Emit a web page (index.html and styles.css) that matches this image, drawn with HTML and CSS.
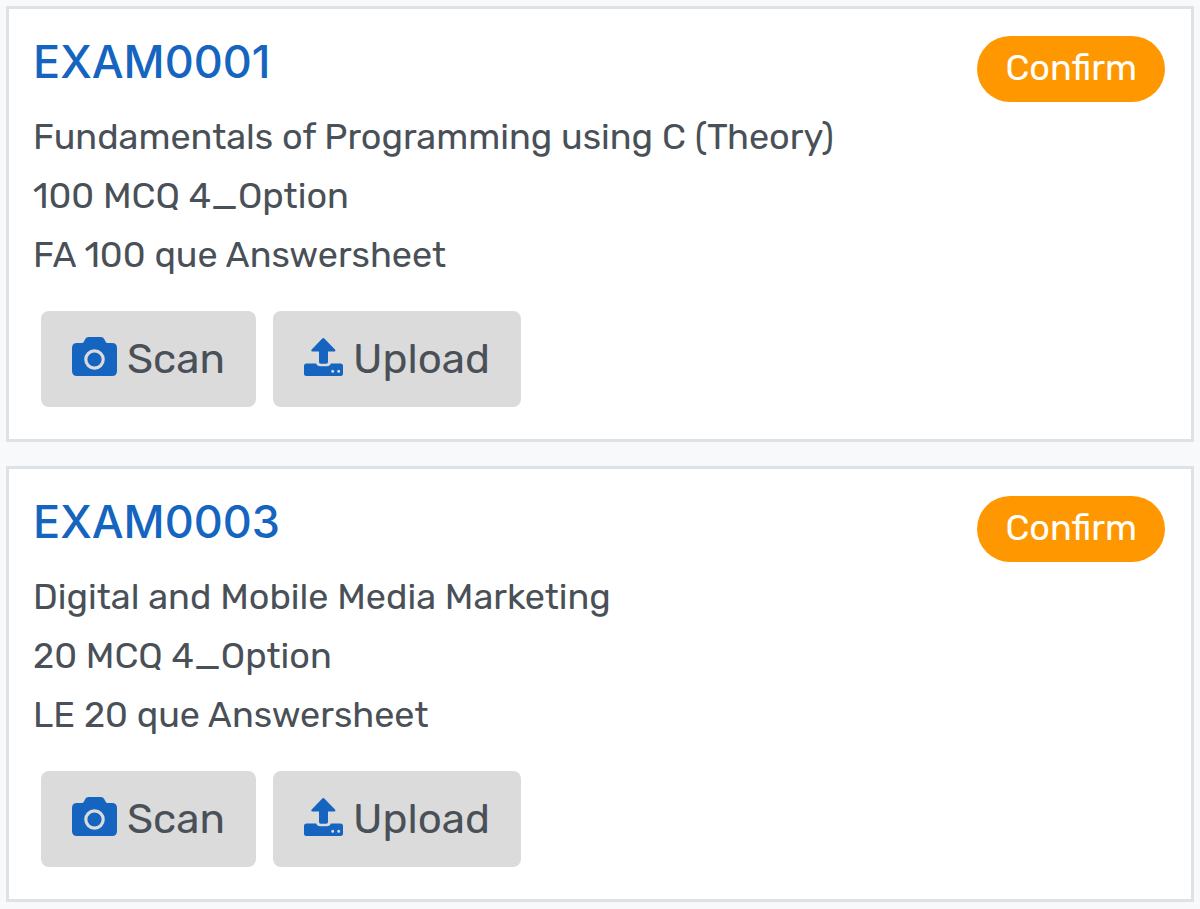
FILE: index.html
```html
<!DOCTYPE html>
<html lang="en">
<head>
<meta charset="utf-8">
<meta name="viewport" content="width=device-width, initial-scale=1">
<title>Exams</title>
<link rel="stylesheet" href="styles.css">
</head>
<body>
<svg class="sprite" aria-hidden="true">
  <symbol id="camera" viewBox="0 0 45 39">
    <path fill="currentColor" d="M5 6h5q1.200 0 2-1.500l1.200-2.500q1-2 3.500-2h12q2.500 0 3.500 2l1.300 2.500q.8 1.500 2 1.500H40q5 0 5 5v23q0 5-5 5H5q-5 0-5-5V11q0-5 5-5z"/>
    <circle cx="22.500" cy="22.500" r="8.700" fill="none" stroke="#dbdbdb" stroke-width="3.200"/>
  </symbol>
  <symbol id="upload" viewBox="0 0 39 38">
    <path fill="currentColor" d="M18.300.6q1-1 2 0L31 11.400q1.200 2.100-.8 2.100H24V24q0 1.700-1.700 1.700h-5.600Q15 25.700 15 24V13.500H8.500q-2 0-.8-2.100z"/>
    <path fill="currentColor" fill-rule="evenodd" d="M2.500 25.500h9.700q.8 2.800 4 2.800h6.600q3.200 0 4-2.800H36.500q2.500 0 2.500 2.500V35.500q0 2.500-2.500 2.500h-34Q0 38 0 35.500V28q0-2.500 2.500-2.500zM28.700 31.800a1.500 1.500 0 1 0 0 3 1.500 1.500 0 0 0 0-3zm6 0a1.500 1.500 0 1 0 0 3 1.500 1.500 0 0 0 0-3z"/>
  </symbol>
</svg>
<main class="exams">
  <article class="card">
    <header class="card-head">
      <h2 class="code">EXAM0001</h2>
      <button class="confirm" type="button">Confirm</button>
    </header>
    <div class="details">
      <p>Fundamentals of Programming using C (Theory)</p>
      <p>100 MCQ 4_Option</p>
      <p>FA 100 que Answersheet</p>
    </div>
    <div class="actions">
      <button class="action" type="button"><svg class="icon icon-camera" aria-hidden="true"><use href="#camera"/></svg>Scan</button>
      <button class="action" type="button"><svg class="icon icon-upload" aria-hidden="true"><use href="#upload"/></svg>Upload</button>
    </div>
  </article>
  <article class="card">
    <header class="card-head">
      <h2 class="code">EXAM0003</h2>
      <button class="confirm" type="button">Confirm</button>
    </header>
    <div class="details">
      <p>Digital and Mobile Media Marketing</p>
      <p>20 MCQ 4_Option</p>
      <p>LE 20 que Answersheet</p>
    </div>
    <div class="actions">
      <button class="action" type="button"><svg class="icon icon-camera" aria-hidden="true"><use href="#camera"/></svg>Scan</button>
      <button class="action" type="button"><svg class="icon icon-upload" aria-hidden="true"><use href="#upload"/></svg>Upload</button>
    </div>
  </article>
</main>
</body>
</html>
```
FILE: styles.css
```css
* { box-sizing: border-box; }
body {
  margin: 0;
  background: #f8f9fb;
  color: #495057;
  font-family: Rubik, Inter, sans-serif;
}
.sprite { display: none; }
.exams {
  display: flex;
  flex-direction: column;
  gap: 24px;
  padding: 6px;
}
.card {
  padding: 24px 26px 32px 24px;
  background: #fff;
  border: 3px solid #dee2e6;
}
.card-head {
  display: flex;
  justify-content: space-between;
  align-items: flex-start;
  height: 74px;
}
.code {
  margin: 0;
  color: #1565c0;
  font-family: Inter, sans-serif;
  font-size: 45px;
  line-height: 58px;
  font-weight: 500;
}
.confirm {
  margin-top: 3px;
  padding: 0 28px 2px;
  border: 0;
  border-radius: 33px;
  background: #ff9800;
  color: #fff;
  font: 400 36px/64px Rubik, Inter, sans-serif;
}
.details p {
  margin: 0;
  font-size: 36px;
  line-height: 59px;
}
.actions {
  display: flex;
  gap: 17px;
  padding: 27px 8px 0;
}
.action {
  display: flex;
  align-items: center;
  gap: 10px;
  height: 96px;
  padding: 0 31px 1px;
  border: 0;
  border-radius: 8px;
  background: #dbdbdb;
  color: #495057;
  font: 400 42px/50px Rubik, Inter, sans-serif;
}
.icon { margin-bottom: 4px; color: #1565c0; }
.icon-camera { width: 45px; height: 39px; }
.icon-upload { width: 39px; height: 38px; }
```
